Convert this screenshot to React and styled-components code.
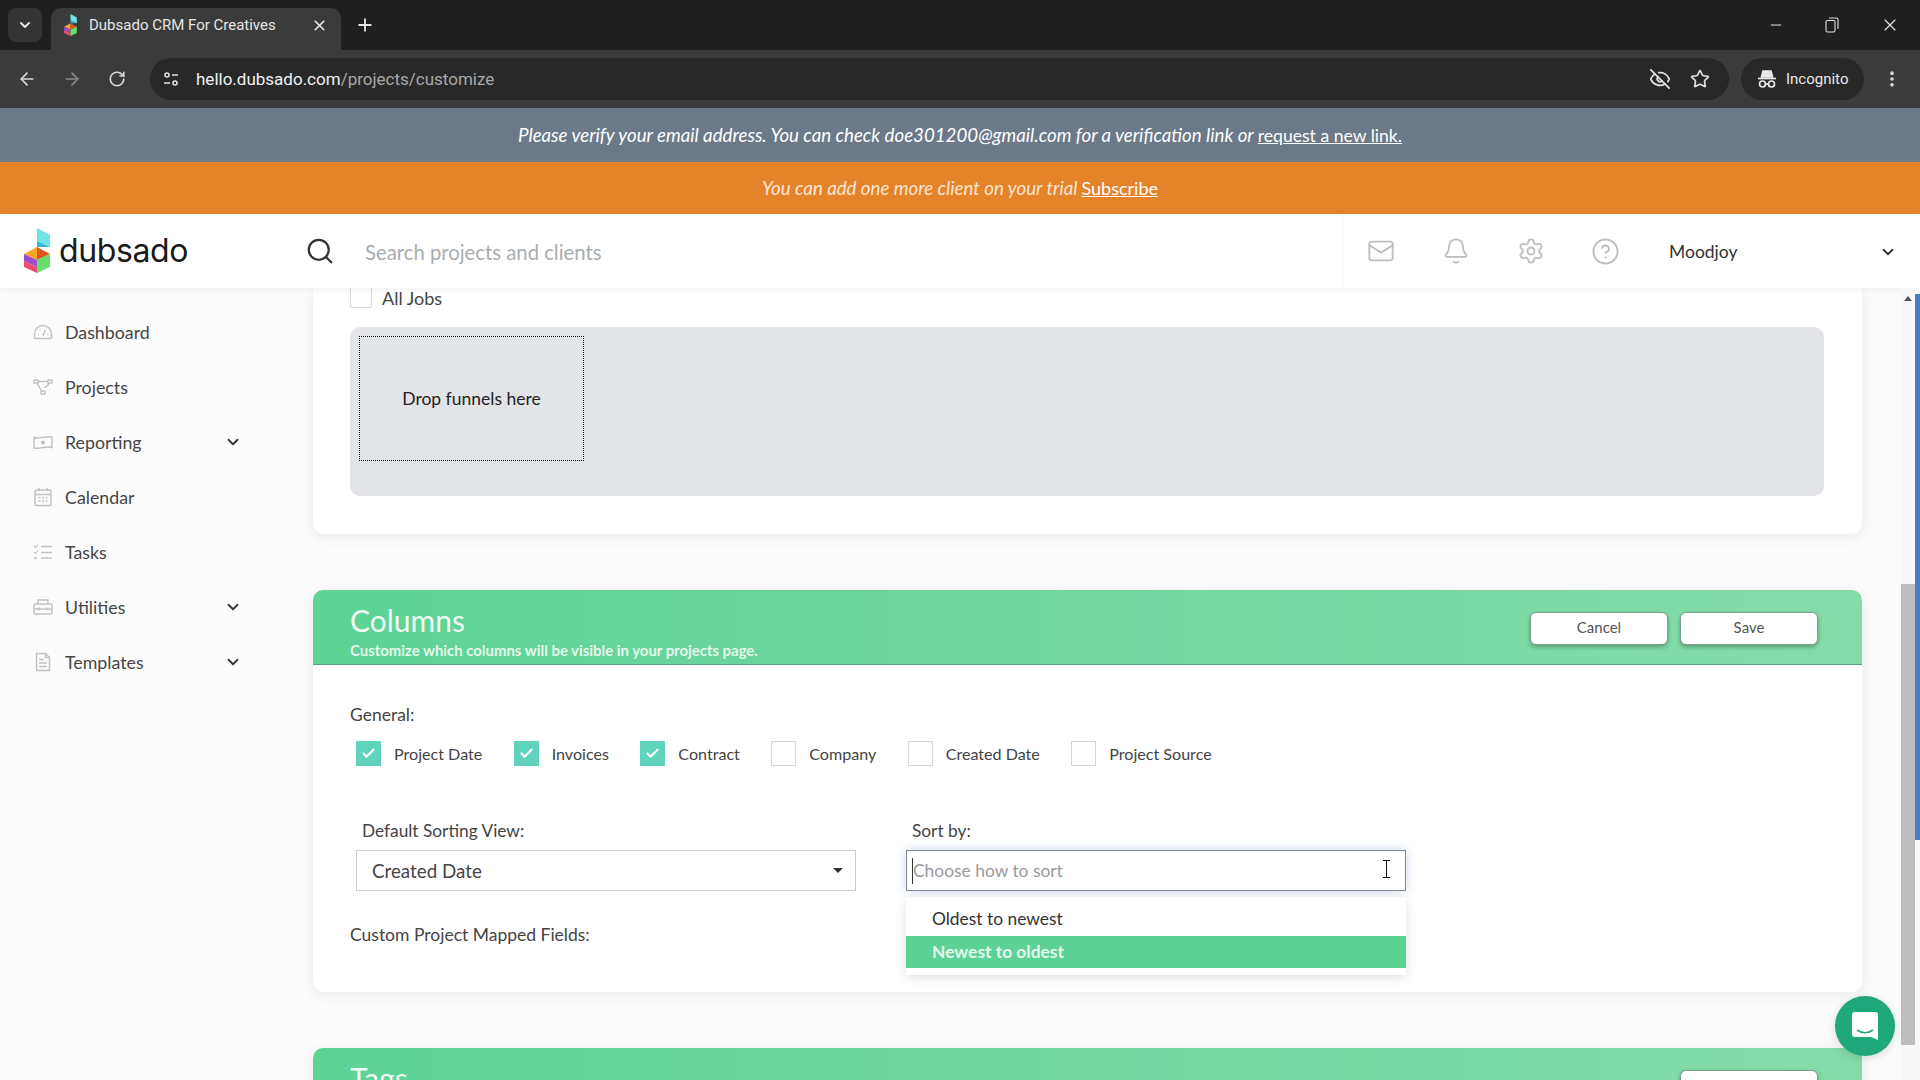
import React from "react";
import styled, { createGlobalStyle } from "styled-components";
import {
  ArrowLeft,
  ArrowRight,
  Bell,
  Check,
  ChevronDown,
  CircleHelp,
  EllipsisVertical,
  EyeOff,
  Mail,
  Minus,
  Plus,
  RotateCw,
  Search,
  Settings,
  Star,
  X,
} from "lucide-react";

const GlobalStyle = createGlobalStyle`
  html, body {
    margin: 0;
    padding: 0;
    background: #fcfcfc;
  }
  * {
    box-sizing: border-box;
  }
`;

const Page = styled.div`
  position: relative;
  width: 1920px;
  height: 1080px;
  overflow: hidden;
  display: flex;
  flex-direction: column;
  font-family: "Lato", "Liberation Sans", sans-serif;
  color: #444;
`;

/* browser chrome */
const TabStrip = styled.div`
  height: 50px;
  flex: none;
  display: flex;
  align-items: flex-end;
  padding-left: 8px;
  background: #1f1f1f;
  color: #e6e6e6;
`;

const TabMenu = styled.div`
  width: 34px;
  height: 34px;
  margin-bottom: 8px;
  border-radius: 8px;
  background: #343434;
  display: flex;
  align-items: center;
  justify-content: center;
`;

const Tab = styled.div`
  width: 290px;
  height: 42px;
  margin-left: 9px;
  padding: 0 13px 8px 13px;
  border-radius: 10px 10px 0 0;
  background: #3b3b3b;
  display: flex;
  align-items: center;
  gap: 12px;
  font-family: "Roboto", sans-serif;
  font-size: 15px;
`;

const TabTitle = styled.span`
  flex: 1;
`;

const NewTab = styled.div`
  width: 32px;
  height: 42px;
  margin-left: 8px;
  padding-bottom: 8px;
  display: flex;
  align-items: center;
  justify-content: center;
`;

const WindowControls = styled.div`
  margin-left: auto;
  height: 50px;
  display: flex;
`;

const WindowButton = styled.div`
  width: ${(p) => (p.$wide ? "60px" : "56px")};
  display: flex;
  align-items: center;
  justify-content: center;
`;

const Toolbar = styled.div`
  height: 58px;
  flex: none;
  display: flex;
  align-items: center;
  padding-left: 9px;
  background: #3b3b3b;
  color: #d8d8d8;
`;

const NavButton = styled.div`
  width: 36px;
  height: 36px;
  margin-right: 9px;
  display: flex;
  align-items: center;
  justify-content: center;
  color: ${(p) => (p.$dim ? "#8a8a8a" : "#d8d8d8")};
`;

const AddressBar = styled.div`
  width: 1579px;
  height: 42px;
  margin-left: 6px;
  padding: 0 19px 0 12px;
  border-radius: 21px;
  background: #282828;
  display: flex;
  align-items: center;
  font-family: "Roboto", sans-serif;
  font-size: 17px;
  color: #a8a8a8;
`;

const Host = styled.span`
  margin-left: 16px;
  color: #f0f0f0;
`;

const AddressIcons = styled.div`
  margin-left: auto;
  display: flex;
  align-items: center;
  gap: 19px;
  color: #e0e0e0;
`;

const IncognitoPill = styled.div`
  width: 123px;
  height: 42px;
  margin-left: 12px;
  padding-left: 16px;
  border-radius: 21px;
  background: #282828;
  display: flex;
  align-items: center;
  gap: 9px;
  font-family: "Roboto", sans-serif;
  font-size: 15px;
  color: #e8e8e8;
`;

const Kebab = styled.div`
  width: 36px;
  margin-left: 10px;
  display: flex;
  justify-content: center;
`;

/* banners */
const VerifyBanner = styled.div`
  height: 54px;
  flex: none;
  display: flex;
  align-items: center;
  justify-content: center;
  background: #6b7988;
  color: #fff;
  font-size: 18.7px;
  font-style: italic;
  a {
    margin-left: 4px;
    font-size: 17.6px;
    font-style: normal;
    color: inherit;
    text-decoration: underline;
  }
`;

const TrialBanner = styled.div`
  height: 52px;
  flex: none;
  display: flex;
  align-items: center;
  justify-content: center;
  padding-bottom: 1px;
  background: #e5832b;
  color: #fbe6d2;
  font-size: 18.7px;
  font-style: italic;
  a {
    margin-left: 4px;
    font-size: 18px;
    font-style: normal;
    color: #fff;
    text-decoration: underline;
  }
`;

/* app header */
const Header = styled.header`
  position: relative;
  height: 74px;
  flex: none;
  display: flex;
  align-items: center;
  background: #fff;
  box-shadow: 0 2px 5px rgba(0, 0, 0, 0.05);
`;

const LogoBlock = styled.div`
  width: 280px;
  flex: none;
  padding-left: 24px;
  padding-bottom: 1px;
  display: flex;
  align-items: center;
  gap: 9px;
`;

const LogoText = styled.span`
  font-family: "Inter", sans-serif;
  font-size: 32px;
  letter-spacing: -0.4px;
  color: #1a1a1a;
  line-height: 1;
`;

const SearchBlock = styled.div`
  flex: 1;
  height: 100%;
  padding-left: 25px;
  border-right: 1px solid #f6f6f6;
  display: flex;
  align-items: center;
  gap: 30px;
  color: #333;
`;

const SearchHint = styled.span`
  margin-top: 1px;
  font-size: 20.3px;
  color: #a9adb0;
`;

const HeaderIcon = styled.div`
  width: 75px;
  flex: none;
  display: flex;
  justify-content: center;
  color: #bcc0c3;
`;

const UserBlock = styled.div`
  width: 277px;
  flex: none;
  padding: 1px 23px 0 26px;
  display: flex;
  align-items: center;
  justify-content: space-between;
  font-size: 17.5px;
  color: #333;
`;

/* body */
const Body = styled.div`
  flex: 1;
  min-height: 0;
  display: flex;
`;

const Sidebar = styled.nav`
  width: 300px;
  flex: none;
  padding: 16px 58px 0 0;
`;

const NavItem = styled.div`
  height: 55px;
  padding-left: 33px;
  display: flex;
  align-items: center;
  font-size: 17.8px;
  color: #454545;
`;

const NavIcon = styled.div`
  width: 32px;
  display: flex;
  color: #bec1c4;
`;

const NavCaret = styled.div`
  margin-left: auto;
  display: flex;
  color: #333;
`;

const Content = styled.main`
  flex: 1;
  min-width: 0;
  padding: 0 39px 0 13px;
  display: flex;
  flex-direction: column;
  gap: 56px;
  overflow: hidden;
`;

const Card = styled.section`
  flex: none;
  background: #fff;
  border-radius: ${(p) => (p.$clipped ? "0 0 10px 10px" : "10px")};
  box-shadow: 0 3px 14px rgba(0, 0, 0, 0.08);
`;

const FunnelBody = styled.div`
  height: 246px;
  padding: 0 38px 0 37px;
`;

const JobsRow = styled.div`
  height: 20px;
  display: flex;
  align-items: flex-end;
  gap: 10px;
  font-size: 18px;
  line-height: 20px;
  color: #444;
`;

const SmallBox = styled.div`
  width: 22px;
  height: 22px;
  margin-top: -2px;
  border: 1px solid #d6d6d6;
  border-radius: 2px;
  background: #fff;
`;

const DropArea = styled.div`
  height: 169px;
  margin-top: 19px;
  padding: 9px;
  border-radius: 10px;
  background: #e2e4e8;
`;

const DropTarget = styled.div`
  width: 225px;
  height: 125px;
  border: 1px dotted #000;
  display: flex;
  align-items: center;
  justify-content: center;
  font-size: 17.5px;
  color: #222;
`;

const CardHeader = styled.div`
  height: 75px;
  padding: 13px 44px 0 37px;
  border-radius: 10px 10px 0 0;
  border-bottom: 1px solid #5c9c7b;
  background: linear-gradient(90deg, #5dd394, #85dcaa);
  display: flex;
  justify-content: space-between;
  align-items: flex-start;
`;

const CardTitle = styled.div`
  font-size: 30px;
  line-height: 34px;
  font-weight: 400;
  color: #eefaf3;
`;

const CardHint = styled.div`
  margin-top: 4px;
  font-size: 14.9px;
  line-height: 18px;
  font-weight: 700;
  color: #e4f8ec;
`;

const HeaderActions = styled.div`
  margin-top: 9px;
  display: flex;
  gap: 12px;
`;

const ActionButton = styled.button`
  width: 138px;
  height: 33px;
  padding: 0 0 3px;
  border: 1px solid #7f9d8d;
  border-radius: 6px;
  background: #fff;
  box-shadow: 0 2px 4px rgba(0, 0, 0, 0.3);
  font-family: inherit;
  font-size: 15px;
  color: #555;
`;

const ColumnsBody = styled.div`
  height: 327px;
  padding: 40px 37px 0;
`;

const SectionLabel = styled.div`
  font-size: 17.5px;
  line-height: 20px;
  color: #444;
`;

const CheckRow = styled.div`
  height: 25px;
  margin-top: 16px;
  padding-left: 6px;
  display: flex;
  gap: 31.4px;
`;

const CheckItem = styled.label`
  display: flex;
  align-items: center;
  gap: 13px;
  font-size: 16.1px;
  color: #444;
`;

const CheckBox = styled.span`
  width: 25px;
  height: 25px;
  border: 1px solid ${(p) => (p.$on ? "#5fd3bc" : "#d4d4d4")};
  background: ${(p) => (p.$on ? "#5fd3bc" : "#fff")};
  display: flex;
  align-items: center;
  justify-content: center;
  color: #fff;
`;

const SortRow = styled.div`
  margin-top: 55px;
  padding-left: 6px;
  display: flex;
  gap: 50px;
`;

const Field = styled.div`
  position: relative;
  width: 500px;
`;

const FieldLabel = styled.div`
  padding-left: 6px;
  font-size: 17.3px;
  line-height: 20px;
  color: #444;
`;

const SelectBox = styled.div`
  height: 41px;
  margin-top: 9px;
  padding: 0 12px 0 15px;
  border: 1px solid #c9ccd0;
  display: flex;
  align-items: center;
  justify-content: space-between;
  font-size: 18.8px;
  color: #444;
`;

const Caret = styled.span`
  width: 0;
  height: 0;
  border-left: 5px solid transparent;
  border-right: 5px solid transparent;
  border-top: 5px solid #333;
`;

const SortInput = styled.div`
  position: relative;
  height: 41px;
  margin-top: 9px;
  padding-left: 5px;
  border: 1px solid #7d8790;
  box-shadow: 0 0 10px rgba(110, 150, 200, 0.35);
  display: flex;
  align-items: center;
  font-size: 17.4px;
  color: #9a9a9a;
`;

const Placeholder = styled.span`
  height: 26px;
  line-height: 26px;
  border-left: 1.5px solid #333;
`;

const IBeam = styled.svg`
  position: absolute;
  top: 9px;
  right: 14px;
`;

const SortMenu = styled.div`
  position: absolute;
  top: calc(100% + 6px);
  left: 0;
  right: 0;
  padding: 7px 0;
  background: #fff;
  box-shadow: 0 3px 10px rgba(0, 0, 0, 0.12);
`;

const SortOption = styled.div`
  height: 32px;
  padding: 0 0 ${(p) => (p.$active ? "2px" : "4px")} 26px;
  display: flex;
  align-items: center;
  font-size: 17.4px;
  font-weight: ${(p) => (p.$active ? 700 : 400)};
  color: ${(p) => (p.$active ? "#e4f8ec" : "#333")};
  background: ${(p) => (p.$active ? "#5cd394" : "transparent")};
`;

const MappedLabel = styled.div`
  margin-top: 34px;
  font-size: 17.5px;
  line-height: 20px;
  color: #444;
`;

/* page scrollbar */
const ScrollTrack = styled.div`
  position: relative;
  width: 19px;
  flex: none;
  padding-top: 8px;
  background: #f8f8f8;
`;

const ScrollArrow = styled.div`
  width: 0;
  height: 0;
  margin-left: 3px;
  border-left: 4px solid transparent;
  border-right: 4px solid transparent;
  border-bottom: 5px solid #555;
`;

const ScrollThumb = styled.div`
  width: 14px;
  height: 461px;
  margin-top: 283px;
  background: #bdbdbd;
`;

const BlueStripe = styled.div`
  position: absolute;
  top: 6px;
  right: 0;
  width: 5px;
  height: 546px;
  background: #4a7cc4;
`;

const ChatBubble = styled.div`
  position: absolute;
  right: 25px;
  bottom: 24px;
  width: 60px;
  height: 60px;
  border-radius: 50%;
  background: #1fa87b;
  box-shadow: 0 2px 8px rgba(0, 0, 0, 0.15);
  display: flex;
  align-items: center;
  justify-content: center;
`;

const LogoMark = ({ width, height }) => (
  <svg width={width} height={height} viewBox="0 0 26 45">
    <polygon points="13,0 26,7 26,19 13,13" fill="#6fe3e6" />
    <polygon points="13,13 26,19 13,19" fill="#35b5d8" />
    <polygon points="0,26 13,19 13,32" fill="#f7a823" />
    <polygon points="13,19 26,26 13,32" fill="#e2571f" />
    <polygon points="0,26 13,32 13,39 0,33" fill="#a04bc9" />
    <polygon points="0,33 13,39 13,45 0,39" fill="#ee4a73" />
    <polygon points="13,32 26,26 26,39 13,45" fill="#66e06b" />
  </svg>
);

const TuneIcon = () => (
  <svg width="18" height="18" viewBox="0 0 18 18" fill="none" stroke="#e0e0e0" strokeWidth="1.6">
    <circle cx="5" cy="5" r="2" />
    <path d="M10 5h6M2 13h6" />
    <circle cx="13" cy="13" r="2" />
  </svg>
);

const RestoreIcon = () => (
  <svg width="14" height="16" viewBox="0 0 14 16" fill="none" stroke="#e0e0e0" strokeWidth="1.1">
    <rect x="1" y="3.5" width="9" height="11.5" rx="1.5" />
    <path d="M4 1h7.5A1.5 1.5 0 0 1 13 2.5V12" />
  </svg>
);

const IncognitoIcon = () => (
  <svg width="20" height="20" viewBox="0 0 20 20" fill="none" stroke="#e8e8e8" strokeWidth="1.7">
    <path d="M6 2h8l1.5 6h-11z" fill="#e8e8e8" />
    <path d="M1 9.5h18" />
    <circle cx="5.5" cy="15" r="3" />
    <circle cx="14.5" cy="15" r="3" />
    <path d="M8.5 15h3" />
  </svg>
);

const NavSvg = ({ children, w = 20, h = 20 }) => (
  <svg width={w} height={h} viewBox={`0 0 ${w} ${h}`} fill="none" stroke="currentColor" strokeWidth="1.4">
    {children}
  </svg>
);

const DashboardIcon = () => (
  <NavSvg>
    <path d="M1.500 15.500V12a8.500 8.500 0 0 1 17 0v3.500a1 1 0 0 1-1 1h-15a1 1 0 0 1-1-1z" />
    <path d="M10 14l2-6M5 12.500h.8M15 12.500h-.8M6.500 8l.6.6" />
  </NavSvg>
);

const ProjectsIcon = () => (
  <NavSvg>
    <rect x="1" y="3" width="4" height="3" />
    <rect x="15" y="3" width="4" height="3" />
    <rect x="8" y="14" width="4" height="3" />
    <path d="M5 4.500h10M4 6l4.500 8M16 6l-1 2-3.500 3" />
  </NavSvg>
);

const ReportingIcon = () => (
  <NavSvg>
    <path d="M1 5.500c6 2 11-2 18-.5v10.500c-6-2-12 2-18 .5z" />
    <circle cx="10" cy="10.500" r="2" fill="currentColor" stroke="none" />
  </NavSvg>
);

const CalendarIcon = () => (
  <NavSvg>
    <rect x="2" y="3" width="16" height="15.500" rx="1.500" />
    <path d="M2 7.500h16M6 1v3M14 1v3" />
    <path d="M5.500 10.500h2M9 10.500h2M12.500 10.500h2M5.500 14h2M9 14h2M12.500 14h2" strokeWidth="1.500" />
  </NavSvg>
);

const TasksIcon = () => (
  <NavSvg>
    <path d="M1 4l1.500 1.500L5 2.500M1 10l1.500 1.500L5 8.500" strokeWidth="1.100" />
    <circle cx="2.500" cy="16" r="1.300" fill="currentColor" stroke="none" />
    <path d="M8 4.500h11M8 10.500h11M8 16h11" strokeWidth="1.700" />
  </NavSvg>
);

const ToolboxIcon = () => (
  <NavSvg>
    <rect x="1" y="7" width="18" height="10" rx="1" />
    <path d="M5 7V3h10v4M1 12h18M6 10.500v3M14 10.500v3" />
  </NavSvg>
);

const TemplatesIcon = () => (
  <NavSvg>
    <path d="M3.500 1.500h9l4 4v13h-13z" />
    <path d="M12.500 1.500v4h4M6 7.500h5M6 11h8M6 14.500h8" />
  </NavSvg>
);

const navItems = [
  { label: "Dashboard", icon: <DashboardIcon /> },
  { label: "Projects", icon: <ProjectsIcon /> },
  { label: "Reporting", icon: <ReportingIcon />, caret: true },
  { label: "Calendar", icon: <CalendarIcon /> },
  { label: "Tasks", icon: <TasksIcon /> },
  { label: "Utilities", icon: <ToolboxIcon />, caret: true },
  { label: "Templates", icon: <TemplatesIcon />, caret: true },
];

const columnOptions = [
  { label: "Project Date", on: true },
  { label: "Invoices", on: true },
  { label: "Contract", on: true },
  { label: "Company" },
  { label: "Created Date" },
  { label: "Project Source" },
];

const App = () => (
  <Page>
    <GlobalStyle />
    <TabStrip>
      <TabMenu>
        <ChevronDown size={16} strokeWidth={3} />
      </TabMenu>
      <Tab>
        <LogoMark width={13} height={22} />
        <TabTitle>Dubsado CRM For Creatives</TabTitle>
        <X size={17} strokeWidth={2.4} />
      </Tab>
      <NewTab>
        <Plus size={20} strokeWidth={2.2} />
      </NewTab>
      <WindowControls>
        <WindowButton>
          <Minus size={16} strokeWidth={1.6} />
        </WindowButton>
        <WindowButton>
          <RestoreIcon />
        </WindowButton>
        <WindowButton $wide>
          <X size={20} strokeWidth={1.4} />
        </WindowButton>
      </WindowControls>
    </TabStrip>
    <Toolbar>
      <NavButton>
        <ArrowLeft size={20} strokeWidth={2} />
      </NavButton>
      <NavButton $dim>
        <ArrowRight size={20} strokeWidth={2} />
      </NavButton>
      <NavButton>
        <RotateCw size={18} strokeWidth={2.2} />
      </NavButton>
      <AddressBar>
        <TuneIcon />
        <Host>hello.dubsado.com</Host>/projects/customize
        <AddressIcons>
          <EyeOff size={22} strokeWidth={1.9} />
          <Star size={20} strokeWidth={2} />
        </AddressIcons>
      </AddressBar>
      <IncognitoPill>
        <IncognitoIcon />
        Incognito
      </IncognitoPill>
      <Kebab>
        <EllipsisVertical size={20} strokeWidth={2.4} />
      </Kebab>
    </Toolbar>

    <VerifyBanner>
      Please verify your email address. You can check doe301200@gmail.com for a verification link or
      <a href="#link">request a new link.</a>
    </VerifyBanner>
    <TrialBanner>
      You can add one more client on your trial
      <a href="#subscribe">Subscribe</a>
    </TrialBanner>

    <Header>
      <LogoBlock>
        <LogoMark width={26} height={45} />
        <LogoText>dubsado</LogoText>
      </LogoBlock>
      <SearchBlock>
        <Search size={30} strokeWidth={1.8} />
        <SearchHint>Search projects and clients</SearchHint>
      </SearchBlock>
      <HeaderIcon>
        <Mail size={28} strokeWidth={1.6} />
      </HeaderIcon>
      <HeaderIcon>
        <Bell size={28} strokeWidth={1.6} />
      </HeaderIcon>
      <HeaderIcon>
        <Settings size={28} strokeWidth={1.6} />
      </HeaderIcon>
      <HeaderIcon>
        <CircleHelp size={29} strokeWidth={1.6} />
      </HeaderIcon>
      <UserBlock>
        Moodjoy
        <ChevronDown size={18} strokeWidth={2.4} />
      </UserBlock>
    </Header>

    <Body>
      <Sidebar>
        {navItems.map((item) => (
          <NavItem key={item.label}>
            <NavIcon>{item.icon}</NavIcon>
            {item.label}
            {item.caret && (
              <NavCaret>
                <ChevronDown size={18} strokeWidth={2.4} />
              </NavCaret>
            )}
          </NavItem>
        ))}
      </Sidebar>

      <Content>
        <Card $clipped>
          <FunnelBody>
            <JobsRow>
              <SmallBox />
              All Jobs
            </JobsRow>
            <DropArea>
              <DropTarget>Drop funnels here</DropTarget>
            </DropArea>
          </FunnelBody>
        </Card>

        <Card>
          <CardHeader>
            <div>
              <CardTitle>Columns</CardTitle>
              <CardHint>Customize which columns will be visible in your projects page.</CardHint>
            </div>
            <HeaderActions>
              <ActionButton>Cancel</ActionButton>
              <ActionButton>Save</ActionButton>
            </HeaderActions>
          </CardHeader>
          <ColumnsBody>
            <SectionLabel>General:</SectionLabel>
            <CheckRow>
              {columnOptions.map((opt) => (
                <CheckItem key={opt.label}>
                  <CheckBox $on={opt.on}>{opt.on && <Check size={15} strokeWidth={3.5} />}</CheckBox>
                  {opt.label}
                </CheckItem>
              ))}
            </CheckRow>
            <SortRow>
              <Field>
                <FieldLabel>Default Sorting View:</FieldLabel>
                <SelectBox>
                  Created Date
                  <Caret />
                </SelectBox>
              </Field>
              <Field>
                <FieldLabel>Sort by:</FieldLabel>
                <SortInput>
                  <Placeholder>Choose how to sort</Placeholder>
                  <IBeam width="9" height="18" viewBox="0 0 9 18" fill="none" stroke="#111" strokeWidth="1">
                    <path d="M1 .5h7M4.500.5v17M1 17.500h7" />
                  </IBeam>
                </SortInput>
                <SortMenu>
                  <SortOption>Oldest to newest</SortOption>
                  <SortOption $active>Newest to oldest</SortOption>
                </SortMenu>
              </Field>
            </SortRow>
            <MappedLabel>Custom Project Mapped Fields:</MappedLabel>
          </ColumnsBody>
        </Card>

        <Card>
          <CardHeader>
            <CardTitle>Tags</CardTitle>
            <HeaderActions>
              <ActionButton>Save</ActionButton>
            </HeaderActions>
          </CardHeader>
        </Card>
      </Content>

      <ScrollTrack>
        <ScrollArrow />
        <ScrollThumb />
        <BlueStripe />
      </ScrollTrack>
    </Body>

    <ChatBubble>
      <svg width="28" height="30" viewBox="0 0 28 30">
        <path d="M4 1h20a3 3 0 0 1 3 3v25l-7-3H4a3 3 0 0 1-3-3V4a3 3 0 0 1 3-3z" fill="#fff" />
        <path d="M6 19c5 3.500 11 3.500 16 0" fill="none" stroke="#1fa87b" strokeWidth="1.6" />
      </svg>
    </ChatBubble>
  </Page>
);

export default App;
